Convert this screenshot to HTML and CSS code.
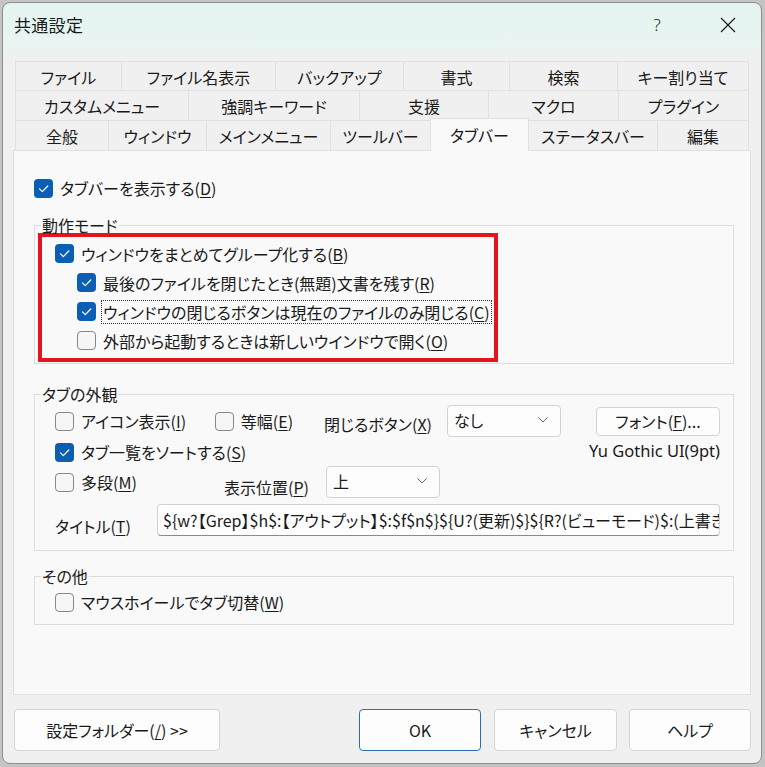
FILE: index.html
```html
<!DOCTYPE html>
<html lang="ja">
<head>
<meta charset="utf-8">
<title>共通設定</title>
<link rel="stylesheet" href="styles.css">
</head>
<body>
<div class="window">
  <div class="titlebar">
    <span class="title">共通設定</span>
    <span class="tb-btn help">?</span>
    <span class="tb-btn close"><svg width="16" height="16" viewBox="0 0 16 16"><path d="M1 1L15 15M15 1L1 15" stroke="#1a1a1a" stroke-width="1.2" fill="none"/></svg></span>
  </div>

  <div class="tabs">
    <div class="tabrow r1">
      <div class="tab">ファイル</div>
      <div class="tab">ファイル名表示</div>
      <div class="tab">バックアップ</div>
      <div class="tab">書式</div>
      <div class="tab">検索</div>
      <div class="tab">キー割り当て</div>
    </div>
    <div class="tabrow r2">
      <div class="tab">カスタムメニュー</div>
      <div class="tab">強調キーワード</div>
      <div class="tab">支援</div>
      <div class="tab">マクロ</div>
      <div class="tab">プラグイン</div>
    </div>
    <div class="tabrow r3">
      <div class="tab">全般</div>
      <div class="tab">ウィンドウ</div>
      <div class="tab">メインメニュー</div>
      <div class="tab">ツールバー</div>
      <div class="tab sel">タブバー</div>
      <div class="tab">ステータスバー</div>
      <div class="tab">編集</div>
    </div>
  </div>

  <div class="panel">
    <div class="cbrow toprow">
      <span class="cb on"><svg viewBox="0 0 19 19"><polyline points="5.5,9.8 8.3,12.6 13.8,7"/></svg></span>
      <span>タブバーを表示する(<u>D</u>)</span>
    </div>

    <fieldset class="grp g1">
      <legend>動作モード</legend>
      <div class="annot">
        <div class="cbrow">
          <span class="cb on"><svg viewBox="0 0 19 19"><polyline points="5.5,9.8 8.3,12.6 13.8,7"/></svg></span>
          <span>ウィンドウをまとめてグループ化する(<u>B</u>)</span>
        </div>
        <div class="cbrow sub">
          <span class="cb on"><svg viewBox="0 0 19 19"><polyline points="5.5,9.8 8.3,12.6 13.8,7"/></svg></span>
          <span>最後のファイルを閉じたとき(無題)文書を残す(<u>R</u>)</span>
        </div>
        <div class="cbrow sub focused">
          <span class="cb on"><svg viewBox="0 0 19 19"><polyline points="5.5,9.8 8.3,12.6 13.8,7"/></svg></span>
          <span class="focus">ウィンドウの閉じるボタンは現在のファイルのみ閉じる(<u>C</u>)</span>
        </div>
        <div class="cbrow sub">
          <span class="cb off"></span>
          <span>外部から起動するときは新しいウインドウで開く(<u>O</u>)</span>
        </div>
      </div>
    </fieldset>

    <fieldset class="grp g2">
      <legend>タブの外観</legend>
      <div class="g2body">
        <div class="row rowa">
          <div class="cbrow w-icon">
            <span class="cb off"></span>
            <span>アイコン表示(<u>I</u>)</span>
          </div>
          <div class="cbrow w-mono">
            <span class="cb off"></span>
            <span>等幅(<u>E</u>)</span>
          </div>
          <span class="lbl w-closebtn">閉じるボタン(<u>X</u>)</span>
          <div class="combo w-combo">
            <span>なし</span>
            <svg class="chev" width="10" height="6" viewBox="0 0 10 6"><polyline points="0.5,0.5 5,5 9.5,0.5"/></svg>
          </div>
          <div class="btn fontbtn">フォント(<u>F</u>)...</div>
        </div>
        <div class="row rowb">
          <div class="cbrow">
            <span class="cb on"><svg viewBox="0 0 19 19"><polyline points="5.5,9.8 8.3,12.6 13.8,7"/></svg></span>
            <span>タブ一覧をソートする(<u>S</u>)</span>
          </div>
          <span class="fontname">Yu Gothic UI(9pt)</span>
        </div>
        <div class="row rowc">
          <div class="cbrow w-multi">
            <span class="cb off"></span>
            <span>多段(<u>M</u>)</span>
          </div>
          <span class="lbl w-pos">表示位置(<u>P</u>)</span>
          <div class="combo w-combo2">
            <span>上</span>
            <svg class="chev" width="10" height="6" viewBox="0 0 10 6"><polyline points="0.5,0.5 5,5 9.5,0.5"/></svg>
          </div>
        </div>
        <div class="row rowd">
          <span class="lbl w-title">タイトル(<u>T</u>)</span>
          <div class="textbox"><span class="tbtext">${w?【Grep】$h$:【アウトプット】$:$f$n$}${U?(更新)$}${R?(ビューモード)$:(上書き)$}</span></div>
        </div>
      </div>
    </fieldset>

    <fieldset class="grp g3">
      <legend>その他</legend>
      <div class="g3body">
        <div class="cbrow">
          <span class="cb off"></span>
          <span>マウスホイールでタブ切替(<u>W</u>)</span>
        </div>
      </div>
    </fieldset>
  </div>

  <div class="buttons">
    <div class="btn b-folder">設定フォルダー(<u>/</u>) &gt;&gt;</div>
    <div class="btn b-ok">OK</div>
    <div class="btn b-cancel">キャンセル</div>
    <div class="btn b-help">ヘルプ</div>
  </div>
</div>
</body>
</html>
```

FILE: styles.css
```css
* { box-sizing: border-box; }

html, body {
  margin: 0;
  padding: 0;
  background: #c4c4c4;
  width: 765px;
  height: 767px;
  overflow: hidden;
}

body {
  font-family: "Noto Sans CJK JP", "Noto Sans", sans-serif;
  font-feature-settings: "palt" 1;
  font-size: 16px;
  line-height: 22px;
  color: #1a1a1a;
}

u { text-decoration: underline; text-underline-offset: 2px; text-decoration-thickness: 1px; }

.window {
  margin: 2px 0 0 2px;
  width: 760px;
  height: 762px;
  border: 1px solid #8e8e8e;
  border-radius: 8px;
  background: linear-gradient(180deg, #e4f4f0 0px, #e8f5f2 40px, #f0f0f0 56px, #f0f0f0 100%);
  display: flex;
  flex-direction: column;
  overflow: hidden;
}

/* title bar */
.titlebar {
  height: 43px;
  display: flex;
  align-items: center;
  padding: 0 10px 0 11px;
  flex: none;
}
.title { font-size: 17px; letter-spacing: 0.3px; }
.tb-btn {
  width: 46px;
  height: 43px;
  display: flex;
  align-items: center;
  justify-content: center;
}
.help { margin-left: auto; font-family: "Noto Sans", sans-serif; font-size: 17px; font-weight: 300; color: #222; margin-right: 25px; }
.close svg { display: block; }

/* tabs */
.tabs {
  margin: 15px 0 0 12px;
  width: 734px;
  position: relative;
  z-index: 1;
  flex: none;
}
.tabrow { display: grid; }
.r1 { grid-template-columns: 106px 154px 128px 106px 108px 132px; height: 29px; }
.r2 { grid-template-columns: 173px 171px 129px 130px 131px; height: 30px; }
.r3 { grid-template-columns: 93px 98px 124px 100px 98px 129px 92px; height: 30px; }

.tab {
  border-top: 1px solid #e0e0e0;
  border-left: 1px solid #e0e0e0;
  display: flex;
  align-items: center;
  justify-content: center;
  background: #f0f0f0;
  white-space: nowrap;
  padding-top: 1px;
}
.tab:last-child { border-right: 1px solid #e0e0e0; }
.tab.sel {
  background: #f9f9f9;
  border-right: 1px solid #e0e0e0;
  margin-top: -2px;
  margin-bottom: -1px;
  margin-right: -1px;
  padding-bottom: 2px;
  position: relative;
  z-index: 2;
}

/* panel */
.panel {
  margin-left: 10px;
  width: 738px;
  height: 545px;
  border: 1px solid #e0e0e0;
  background: #f9f9f9;
  flex: none;
}

.cbrow {
  display: flex;
  align-items: center;
  gap: 7px;
  height: 29px;
  white-space: nowrap;
}
.cb {
  width: 19px;
  height: 19px;
  border-radius: 4px;
  flex: none;
  display: block;
}
.cb.on { background: #0a5fb4; }
.cb.on svg { display: block; width: 19px; height: 19px; }
.cb.on polyline { fill: none; stroke: #ffffff; stroke-width: 1.2; stroke-linecap: round; stroke-linejoin: round; }
.cb.off { border: 1px solid #888888; background: #f6f6f6; }

.toprow { margin: 23px 0 0 20px; height: 28px; }

.grp {
  margin: 0 0 0 20px;
  padding: 0;
  width: 700px;
  min-width: 0;
  border: 1px solid #dcdcdc;
}
.grp legend {
  margin-left: 6px;
  padding: 0 1px;
  line-height: 18px;
}

.g1 { margin-top: 14px; }
.annot {
  margin: -1px 0 1px 3px;
  width: 460px;
  border: 4px solid #e3161f;
  padding: 2px 0 3px 13px;
}
.cbrow.sub { padding-left: 22px; }
.cbrow.focused { gap: 5px; }
.focus { border: 1px dotted #333; padding: 0 1px; line-height: 22px; }

.g2 { margin-top: 21px; }
.g2body { padding: 2px 13px 14px 20px; }
.row { display: flex; align-items: center; }
.rowa { height: 32px; }
.rowb { height: 28px; margin-top: 1px; }
.rowc { height: 32px; }
.rowd { height: 32px; margin-top: 6px; }

.w-icon { width: 161px; }
.w-mono { width: 110px; }
.lbl { white-space: nowrap; flex: none; }
.w-closebtn { width: 123px; margin-top: 6px; }
.w-multi { width: 169px; }
.w-pos { width: 102px; margin-top: 10px; }
.w-title { width: 102px; margin-top: 12px; }

.combo {
  height: 32px;
  border: 1px solid #d2d2d2;
  border-radius: 4px;
  background: #fdfdfd;
  display: flex;
  align-items: center;
  padding: 0 12px 2px 6px;
  flex: none;
}
.combo span { flex: 1; }
.chev polyline { fill: none; stroke: #666; stroke-width: 1; }
.w-combo { width: 114px; }
.w-combo2 { width: 114px; }

.btn {
  border: 1px solid #d4d4d4;
  border-radius: 4px;
  background: #fdfdfd;
  display: flex;
  align-items: center;
  justify-content: center;
  white-space: nowrap;
  flex: none;
}
.fontbtn { width: 124px; height: 29px; margin-left: 35px; padding-bottom: 1px; }
.fontname { margin-left: auto; margin-top: -2px; font-family: "Noto Sans", "Noto Sans CJK JP", sans-serif; font-size: 16.5px; }

.textbox {
  flex: 1;
  height: 32px;
  border: 1px solid #d2d2d2;
  border-bottom: 1px solid #8a8a8a;
  border-radius: 4px;
  background: #fefefe;
  padding: 4px 0 0 5px;
  white-space: nowrap;
  overflow: hidden;
}

.g3 { margin-top: 16px; }
.g3body { padding: 3px 0 8px 20px; }
.g3body .cbrow { height: 28px; }

/* bottom buttons */
.buttons {
  display: flex;
  margin: 14px 0 0 11px;
  height: 42px;
  flex: none;
}
.buttons .btn { height: 42px; }
.b-folder { width: 206px; }
.b-ok { width: 122px; margin-left: 139px; border-color: #2f6db3; }
.b-cancel { width: 123px; margin-left: 13px; }
.b-help { width: 122px; margin-left: 12px; }
```
